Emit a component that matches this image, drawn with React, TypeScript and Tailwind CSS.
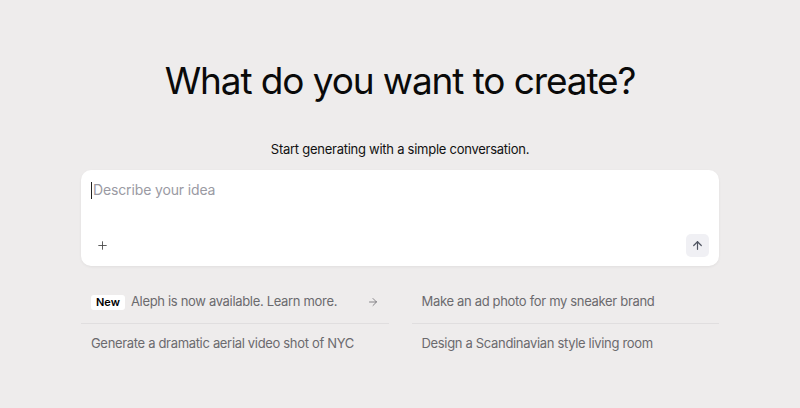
import { ArrowUp, ArrowRight, Plus } from "lucide-react";

const suggestions = [
  "Make an ad photo for my sneaker brand",
  "Generate a dramatic aerial video shot of NYC",
  "Design a Scandinavian style living room",
];

export default function App() {
  return (
    <div className="min-h-screen w-full bg-[#eeecec] font-['Inter',sans-serif] text-black">
      <div className="mx-auto flex w-[638px] flex-col items-center pt-[55px]">
        <h1 className="text-[37px] font-normal leading-[52px] tracking-[-0.03em] text-[#0a0a0a]">
          What do you want to create?
        </h1>
        <p className="mt-[33px] text-[13px] leading-[18px] tracking-[-0.02em] text-[#111]">
          Start generating with a simple conversation.
        </p>

        {/* Prompt box */}
        <div className="mt-[12px] flex h-[96px] w-full flex-col justify-between rounded-[10px] bg-white px-[10px] pb-[9px] pt-[11px] shadow-[0_1px_3px_rgba(0,0,0,0.06)]">
          <div className="flex items-center text-[14px] leading-[18px] tracking-[-0.01em] text-[#9a9aa3]">
            <span className="mr-px inline-block h-[17px] w-px bg-[#222]" />
            Describe your idea
          </div>
          <div className="flex items-center justify-between">
            <button className="flex h-[23px] w-[23px] items-center justify-center text-[#444]">
              <Plus className="h-[13px] w-[13px]" strokeWidth={1.6} />
            </button>
            <button className="flex h-[23px] w-[23px] items-center justify-center rounded-[5px] bg-[#f0f0f4] text-[#4f5461]">
              <ArrowUp className="h-[13px] w-[13px]" strokeWidth={2.2} />
            </button>
          </div>
        </div>

        {/* Suggestions */}
        <div className="mt-[17px] grid w-full grid-cols-2 gap-x-[23px] text-[13px] tracking-[-0.025em] text-[#6b6a6e]">
          <div className="flex h-[41px] items-center justify-between border-b border-[#e0dedf] px-[10px] pb-[2px]">
            <div className="flex items-center gap-[6px]">
              <span className="rounded-[3px] bg-white px-[5px] text-[11px] font-semibold leading-[15px] tracking-normal text-black">
                New
              </span>
              <span>Aleph is now available. Learn more.</span>
            </div>
            <ArrowRight className="h-[12px] w-[12px]" strokeWidth={1.6} />
          </div>
          {suggestions.map((s, i) => (
            <div
              key={s}
              className={
                i === 0
                  ? "flex h-[41px] items-center border-b border-[#e0dedf] px-[10px] pb-[2px]"
                  : "flex h-[40px] items-center px-[10px]"
              }
            >
              {s}
            </div>
          ))}
        </div>
      </div>
    </div>
  );
}
